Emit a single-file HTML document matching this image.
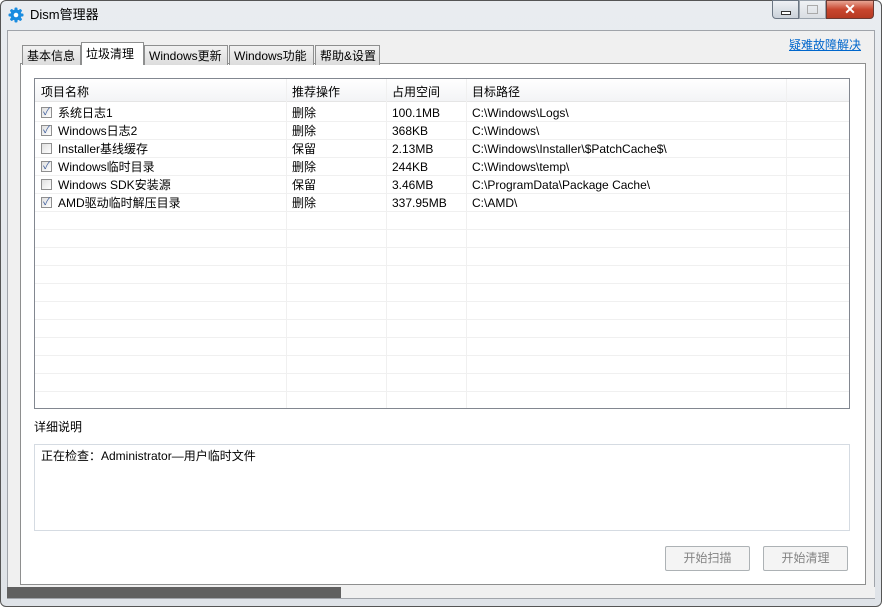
<!DOCTYPE html>
<html><head><meta charset="utf-8"><style>
*{box-sizing:border-box;margin:0;padding:0}
body{width:882px;height:607px;overflow:hidden;background:#fff;font-family:"Liberation Sans","Noto Sans CJK SC",sans-serif;font-size:12px;line-height:14px;color:#000;position:relative}
.a{position:absolute}
.frame{left:0;top:0;width:882px;height:607px;border:1px solid #555;border-radius:6px;background:linear-gradient(#e9ecf0,#dfe3e8)}
.client{left:7px;top:30px;width:868px;height:569px;background:#f0f0f0;border:1px solid #a0a4aa}
.tab{top:44px;height:20px;background:linear-gradient(#f2f2f2,#dcdcdc);border:1px solid #8e8f8f;border-bottom:none;font-size:12px;line-height:16px;padding:2px 4px 0;white-space:nowrap}
.panel{left:20px;top:63px;width:846px;height:522px;background:#fff;border:1px solid #8e8f8f}
.grid{left:34px;top:78px;width:816px;height:331px;border:1px solid #828790;background:#fff;overflow:hidden}
.hl{position:absolute;left:0;width:816px;height:1px;background:#f0f0f0}
.vl{position:absolute;top:0;height:331px;width:1px;background:#f0f0f0}
.cell{position:absolute;font-size:12px;line-height:14px;white-space:nowrap}
.cb{position:absolute;left:6px;width:11px;height:11px;border:1px solid #8f8f8f;background:linear-gradient(135deg,#e0e0e0,#fff);font-size:10px;line-height:9px;text-align:center;color:#3b5b9a}
.btn{top:546px;width:85px;height:25px;border:1px solid #adb2b5;border-radius:2px;background:#f4f4f4;color:#838383;text-align:center;line-height:23px;font-size:12px}
</style></head><body>
<div class="a frame"></div>
<svg class="a" style="left:8px;top:7px" width="16" height="16" viewBox="0 0 16 16"><g fill="#1a8ce0"><circle cx="8" cy="8" r="5.5"/><rect x="6.5" y="0.5" width="3" height="15" rx="1"/><rect x="0.5" y="6.5" width="15" height="3" rx="1"/><rect x="6.5" y="0.5" width="3" height="15" rx="1" transform="rotate(45 8 8)"/><rect x="6.5" y="0.5" width="3" height="15" rx="1" transform="rotate(-45 8 8)"/></g><circle cx="8" cy="8" r="2.3" fill="#fff"/></svg>
<div class="a" style="left:30px;top:7px;font-size:13px;line-height:16px">Dism管理器</div>
<div class="a" style="left:772px;top:0;width:27px;height:19px;border:1px solid #6b7683;border-radius:0 0 0 4px;background:linear-gradient(#eef1f5,#cbd2da)"><div class="a" style="left:8px;top:10px;width:10px;height:4px;border:1px solid #333;background:#fff"></div></div>
<div class="a" style="left:799px;top:0;width:27px;height:19px;border:1px solid #9aa3ad;background:linear-gradient(#f0f2f5,#d9dde2)"><div class="a" style="left:7px;top:4px;width:11px;height:9px;border:1px solid #aaa"></div></div>
<div class="a" style="left:826px;top:0;width:48px;height:19px;border:1px solid #6b3a33;border-radius:0 0 4px 0;background:linear-gradient(#e8a493,#c8462e 50%,#b63a22);color:#fff;font-weight:bold;text-align:center;font-size:14px;line-height:17px">✕</div>
<div class="a client"></div>
<div class="a" style="left:789px;top:38px;font-size:12px;color:#0066cc;text-decoration:underline">疑难故障解决</div>
<div class="a panel"></div>
<div class="a tab" style="left:22px;width:59px;top:45px">基本信息</div>
<div class="a tab" style="left:144px;width:84px;top:45px">Windows更新</div>
<div class="a tab" style="left:229px;width:85px;top:45px">Windows功能</div>
<div class="a tab" style="left:315px;width:65px;top:45px">帮助&amp;设置</div>
<div class="a tab" style="left:81px;width:63px;top:42px;height:23px;background:#fff;padding-top:3px">垃圾清理</div>
<div class="a grid">
<div style="position:absolute;left:0;top:0;width:816px;height:23px;background:linear-gradient(#fff,#f3f4f6);border-bottom:1px solid #e5e5e5"></div>
<div class="vl" style="left:251px"></div><div class="vl" style="left:351px"></div><div class="vl" style="left:431px"></div><div class="vl" style="left:751px"></div>
<div class="hl" style="top:42px"></div><div class="hl" style="top:60px"></div><div class="hl" style="top:78px"></div><div class="hl" style="top:96px"></div><div class="hl" style="top:114px"></div><div class="hl" style="top:132px"></div><div class="hl" style="top:150px"></div><div class="hl" style="top:168px"></div><div class="hl" style="top:186px"></div><div class="hl" style="top:204px"></div><div class="hl" style="top:222px"></div><div class="hl" style="top:240px"></div><div class="hl" style="top:258px"></div><div class="hl" style="top:276px"></div><div class="hl" style="top:294px"></div><div class="hl" style="top:312px"></div>
<div class="cell" style="left:6px;top:6px">项目名称</div><div class="cell" style="left:257px;top:6px">推荐操作</div><div class="cell" style="left:357px;top:6px">占用空间</div><div class="cell" style="left:437px;top:6px">目标路径</div>

<div class="cb" style="top:28px">✓</div><div class="cell" style="left:23px;top:27px">系统日志1</div><div class="cell" style="left:257px;top:27px">删除</div><div class="cell" style="left:357px;top:27px">100.1MB</div><div class="cell" style="left:437px;top:27px">C:\Windows\Logs\</div>
<div class="cb" style="top:46px">✓</div><div class="cell" style="left:23px;top:45px">Windows日志2</div><div class="cell" style="left:257px;top:45px">删除</div><div class="cell" style="left:357px;top:45px">368KB</div><div class="cell" style="left:437px;top:45px">C:\Windows\</div>
<div class="cb" style="top:64px"></div><div class="cell" style="left:23px;top:63px">Installer基线缓存</div><div class="cell" style="left:257px;top:63px">保留</div><div class="cell" style="left:357px;top:63px">2.13MB</div><div class="cell" style="left:437px;top:63px">C:\Windows\Installer\$PatchCache$\</div>
<div class="cb" style="top:82px">✓</div><div class="cell" style="left:23px;top:81px">Windows临时目录</div><div class="cell" style="left:257px;top:81px">删除</div><div class="cell" style="left:357px;top:81px">244KB</div><div class="cell" style="left:437px;top:81px">C:\Windows\temp\</div>
<div class="cb" style="top:100px"></div><div class="cell" style="left:23px;top:99px">Windows SDK安装源</div><div class="cell" style="left:257px;top:99px">保留</div><div class="cell" style="left:357px;top:99px">3.46MB</div><div class="cell" style="left:437px;top:99px">C:\ProgramData\Package Cache\</div>
<div class="cb" style="top:118px">✓</div><div class="cell" style="left:23px;top:117px">AMD驱动临时解压目录</div><div class="cell" style="left:257px;top:117px">删除</div><div class="cell" style="left:357px;top:117px">337.95MB</div><div class="cell" style="left:437px;top:117px">C:\AMD\</div>
</div>
<div class="a" style="left:34px;top:420px">详细说明</div>
<div class="a" style="left:34px;top:444px;width:816px;height:87px;border:1px solid #d5dbe2;background:#fff"></div>
<div class="a" style="left:41px;top:449px">正在检查：Administrator—用户临时文件</div>
<div class="a btn" style="left:665px">开始扫描</div>
<div class="a btn" style="left:763px">开始清理</div>
<div class="a" style="left:7px;top:587px;width:868px;height:11px;background:#f0f0f0"></div>
<div class="a" style="left:7px;top:587px;width:334px;height:11px;background:#606060"></div>
</body></html>
